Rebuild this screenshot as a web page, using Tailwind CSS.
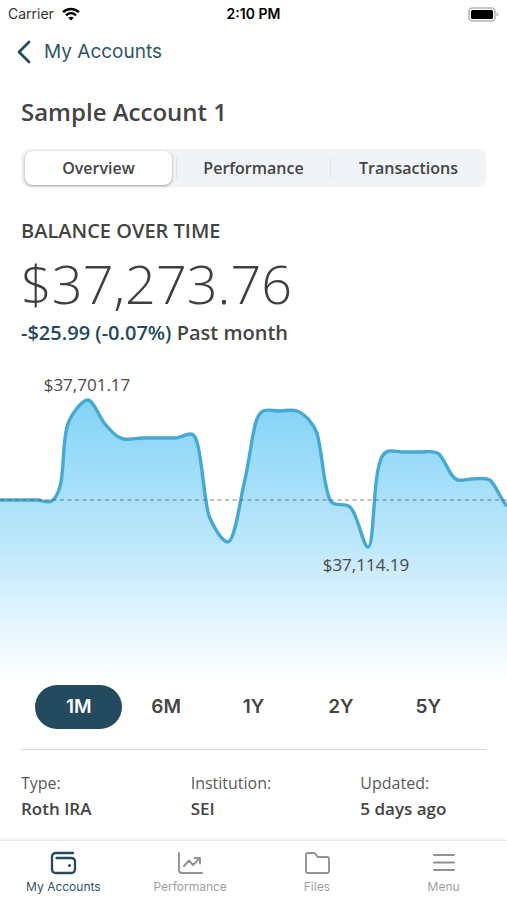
<!DOCTYPE html>
<html lang="en">
<head>
  <meta charset="UTF-8" />
  <meta name="viewport" content="width=device-width, initial-scale=1.0" />
  <title>Sample Account 1</title>
  <script src="https://cdn.jsdelivr.net/npm/@tailwindcss/browser@4"></script>
</head>
<body class="font-['Open_Sans',sans-serif] bg-white text-[#444444] min-h-screen flex flex-col">

<!-- Status bar -->
<div class="grid grid-cols-3 items-center h-7 px-2 font-[Inter,sans-serif] text-sm text-black">
  <div class="flex items-center gap-2 text-[#333333]">
    <span>Carrier</span>
    <svg class="w-[18px] h-[14px]" viewBox="0 0 18 14" fill="none" stroke="#000" stroke-width="2.4">
      <path d="M1 5.2C5.5 0.9 12.5 0.9 17 5.2" />
      <path d="M4 8.3C6.9 5.6 11.1 5.6 14 8.3" />
      <path d="M6.3 10.7C7.9 9.3 10.1 9.3 11.7 10.7L9 13.4Z" fill="#000" stroke="none" />
    </svg>
  </div>
  <div class="text-center font-semibold">2:10 PM</div>
  <svg class="justify-self-end w-[31px] h-[15px]" viewBox="0 0 31 15">
    <rect x="1" y="1" width="26" height="13" rx="3.5" fill="#fff" stroke="#b5b5b5" stroke-width="1.6" />
    <rect x="3" y="3" width="22" height="9" rx="1.5" fill="#000" />
    <path d="M28.5 5.5C30.8 6 30.8 9 28.5 9.5Z" fill="#b5b5b5" />
  </svg>
</div>

<header class="flex items-center h-12 px-4">
  <a href="#" class="flex items-center gap-3 font-[Inter,sans-serif] text-[19px] text-[#2f5468]">
    <svg class="w-4 h-6" viewBox="0 0 16 24" fill="none" stroke="#234a5e" stroke-width="2.8" stroke-linecap="round" stroke-linejoin="round">
      <path d="M13 2L3 12L13 22" />
    </svg>
    My Accounts
  </a>
</header>

<main class="flex-1">
  <div class="px-[21px] pt-5">
    <h1 class="text-2xl leading-8 font-semibold">Sample Account 1</h1>

    <!-- Tabs -->
    <div class="mt-[21px] grid grid-cols-3 items-center h-[38px] rounded-lg bg-[#f0f4f6] font-semibold text-base">
      <button class="mx-1 h-[34px] rounded-lg bg-white shadow-[0_1px_3px_rgba(0,0,0,0.35)]">Overview</button>
      <button class="h-5 leading-5 border-x border-[#dde2e5]">Performance</button>
      <button class="h-5 leading-5">Transactions</button>
    </div>

    <h2 class="mt-8 text-xl leading-6 font-semibold">BALANCE OVER TIME</h2>
    <p class="mt-2 text-[54px] leading-[64px] font-light text-[#3f3f3f]">$37,273.76</p>
    <p class="mt-1 text-xl leading-7 font-semibold"><span class="text-[#234a5e]">-$25.99 (-0.07%)</span> Past month</p>
  </div>

  <!-- Chart -->
  <svg class="block w-full mt-6" viewBox="0 0 507 310">
    <defs>
      <linearGradient id="area" gradientUnits="userSpaceOnUse" x1="0" y1="29" x2="0" y2="310">
        <stop offset="0" stop-color="#83d3f7" />
        <stop offset="0.5" stop-color="#bce7fb" />
        <stop offset="1" stop-color="#ffffff" />
      </linearGradient>
    </defs>
    <path fill="url(#area)" d="M0 129H38C44 130 50 133 54 128C66 114 61 80 67 56C70 44 82 29 88 29C94 30 99 46 105 53C111 60 117 67 124 68C130 69 136 67 142 67H175C181 67 186 63 190 63C194 63 196 66 198 75C203 97 204 128 209 145C213 155 222 171 228 171C234 170 238 143 243 117C250 90 252 60 257 48C262 35 270 40 280 40C286 40 291 38 297 40C305 43 313 52 317 62C323 85 323 113 330 129C334 137 344 131 350 136C358 143 363 176 368 176C375 176 372 99 383 84C388 77 396 81 403 81H420C427 81 434 79 439 83C446 90 450 107 458 109C463 110 467 108 472 108C478 108 484 106 490 109C497 116 501 129 507 135V310H0Z" />
    <path fill="none" stroke="#45a9d4" stroke-width="3.4" d="M0 129H38C44 130 50 133 54 128C66 114 61 80 67 56C70 44 82 29 88 29C94 30 99 46 105 53C111 60 117 67 124 68C130 69 136 67 142 67H175C181 67 186 63 190 63C194 63 196 66 198 75C203 97 204 128 209 145C213 155 222 171 228 171C234 170 238 143 243 117C250 90 252 60 257 48C262 35 270 40 280 40C286 40 291 38 297 40C305 43 313 52 317 62C323 85 323 113 330 129C334 137 344 131 350 136C358 143 363 176 368 176C375 176 372 99 383 84C388 77 396 81 403 81H420C427 81 434 79 439 83C446 90 450 107 458 109C463 110 467 108 472 108C478 108 484 106 490 109C497 116 501 129 507 135" />
    <path fill="none" stroke="#555" stroke-opacity="0.5" stroke-width="1.3" stroke-dasharray="4 3.5" d="M0 129H507" />
    <text x="87" y="20" text-anchor="middle" font-size="17" fill="#4a4a4a">$37,701.17</text>
    <text x="366" y="200" text-anchor="middle" font-size="17" fill="#4a4a4a">$37,114.19</text>
  </svg>

  <!-- Period -->
  <div class="mt-1 mx-[35px] grid grid-cols-5 font-[Inter,sans-serif] font-semibold text-[19px]">
    <button class="h-11 rounded-full bg-[#234a5e] text-white">1M</button>
    <button class="h-11">6M</button>
    <button class="h-11">1Y</button>
    <button class="h-11">2Y</button>
    <button class="h-11">5Y</button>
  </div>

  <dl class="mx-[21px] mt-5 pt-5 pb-4 border-t border-[#d8d8d8] grid grid-cols-3 gap-11 text-base leading-[26px] whitespace-nowrap">
    <div>
      <dt class="text-[#5a5a5a]">Type:</dt>
      <dd class="font-semibold text-[17px]">Roth IRA</dd>
    </div>
    <div>
      <dt class="text-[#5a5a5a]">Institution:</dt>
      <dd class="font-semibold text-[17px]">SEI</dd>
    </div>
    <div>
      <dt class="text-[#5a5a5a]">Updated:</dt>
      <dd class="font-semibold text-[17px]">5 days ago</dd>
    </div>
  </dl>
</main>

<!-- Bottom nav -->
<nav class="sticky bottom-0 grid grid-cols-4 h-[60px] pt-2 bg-white border-t border-[#e8e8e8] shadow-[0_-1px_4px_rgba(0,0,0,0.06)] font-[Inter,sans-serif] text-xs text-[#a0a0a0]">
  <a href="#" class="flex flex-col items-center gap-0.5 text-[#2f5468]">
    <svg class="w-7 h-7" viewBox="0 0 28 28" fill="none" stroke="#234a5e" stroke-width="2.3" stroke-linecap="round" stroke-linejoin="round">
      <path d="M24 4H7Q3 4 3 8V20Q3 24 7 24H22Q26 24 26 20V13Q26 9 22 9H7.5" />
      <circle cx="20.5" cy="16.5" r="1.5" fill="#234a5e" stroke="none" />
    </svg>
    My Accounts
  </a>
  <a href="#" class="flex flex-col items-center gap-0.5">
    <svg class="w-7 h-7" viewBox="0 0 28 28" fill="none" stroke="#929292" stroke-width="1.9" stroke-linecap="round" stroke-linejoin="round">
      <path d="M3 4V21Q3 24 6 24H26" />
      <path d="M8 17L13 11.5L17 16L24 9M18.5 9H24V14.5" />
    </svg>
    Performance
  </a>
  <a href="#" class="flex flex-col items-center gap-0.5">
    <svg class="w-7 h-7" viewBox="0 0 28 28" fill="none" stroke="#929292" stroke-width="1.9" stroke-linecap="round" stroke-linejoin="round">
      <path d="M5 4H10.5Q12 4 13 5.5L14.500 8H24Q26 8 26 10V22Q26 24 24 24H5Q3 24 3 22V6Q3 4 5 4Z" />
    </svg>
    Files
  </a>
  <a href="#" class="flex flex-col items-center gap-0.5">
    <svg class="w-7 h-7" viewBox="0 0 28 28" fill="none" stroke="#929292" stroke-width="2" stroke-linecap="round">
      <path d="M4 6H24M4 13.5H24M4 21H24" />
    </svg>
    Menu
  </a>
</nav>

</body>
</html>
